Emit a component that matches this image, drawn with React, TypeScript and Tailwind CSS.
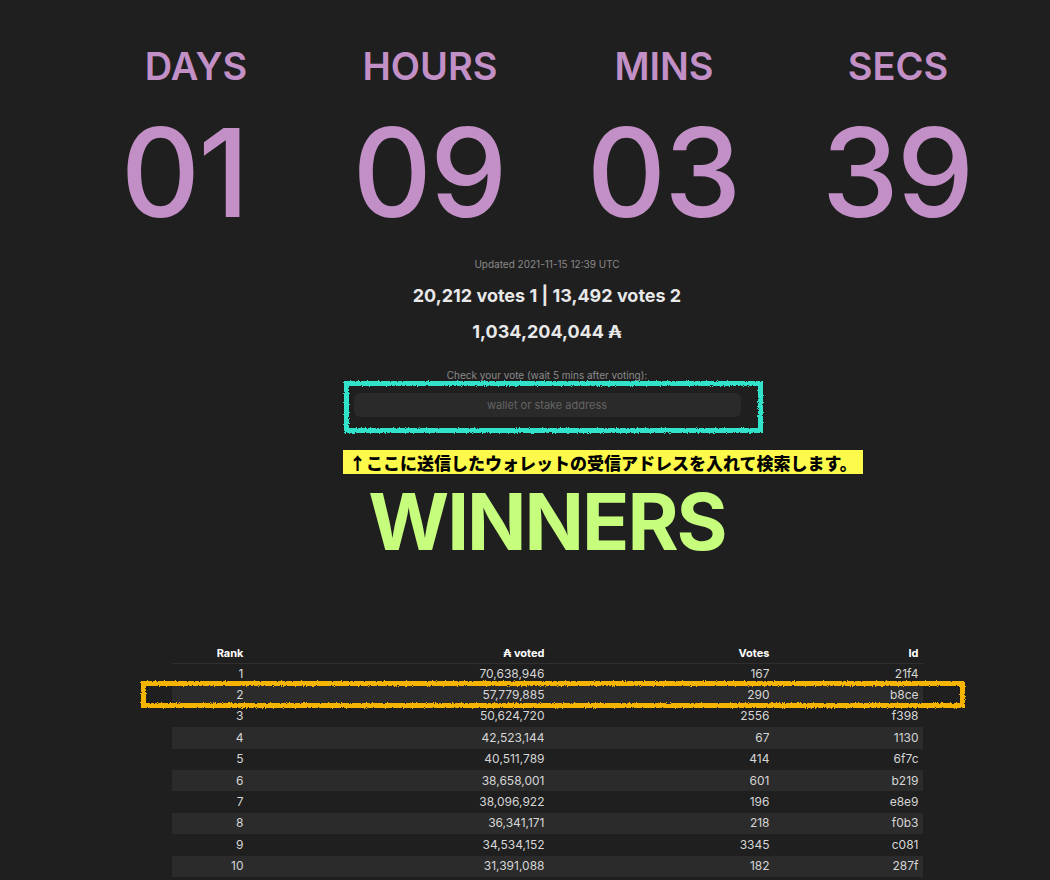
import { clsx } from 'clsx'

const UNITS = [
  { label: 'DAYS', value: '01', nudge: 'pr-[24px]' },
  { label: 'HOURS', value: '09', nudge: 'pr-[2px]' },
  { label: 'MINS', value: '03', nudge: 'pr-[2px]' },
  { label: 'SECS', value: '39', nudge: 'pr-[2px]' },
]

const WINNERS = [
  { rank: 1, ada: '70,638,946', votes: 167, id: '21f4' },
  { rank: 2, ada: '57,779,885', votes: 290, id: 'b8ce' },
  { rank: 3, ada: '50,624,720', votes: 2556, id: 'f398' },
  { rank: 4, ada: '42,523,144', votes: 67, id: '1130' },
  { rank: 5, ada: '40,511,789', votes: 414, id: '6f7c' },
  { rank: 6, ada: '38,658,001', votes: 601, id: 'b219' },
  { rank: 7, ada: '38,096,922', votes: 196, id: 'e8e9' },
  { rank: 8, ada: '36,341,171', votes: 218, id: 'f0b3' },
  { rank: 9, ada: '34,534,152', votes: 3345, id: 'c081' },
  { rank: 10, ada: '31,391,088', votes: 182, id: '287f' },
]

// hand-drawn marker outline
function Marker({ id, color, width, height, stroke, className }: {
  id: string; color: string; width: number; height: number; stroke: number; className: string
}) {
  return (
    <svg width={width} height={height} className={clsx('absolute pointer-events-none', className)}>
      <defs>
        <filter id={id} x="-5%" y="-20%" width="110%" height="140%">
          <feTurbulence type="fractalNoise" baseFrequency="0.9" numOctaves="2" seed="3" />
          <feDisplacementMap in="SourceGraphic" scale="3" />
        </filter>
      </defs>
      <rect x={stroke / 2 + 1} y={stroke / 2 + 1} width={width - stroke - 2} height={height - stroke - 2}
        fill="none" stroke={color} strokeWidth={stroke} filter={`url(#${id})`} />
    </svg>
  )
}

export default function App() {
  return (
    <div className="w-full min-h-[880px] bg-[#1f1f1f] overflow-hidden" style={{ fontFamily: 'Inter, "Noto Sans CJK JP", sans-serif' }}>
      <div className="relative w-[1094px] flex flex-col items-center pt-[46px] pb-[40px]">
        {/* Countdown */}
        <div className="grid grid-cols-4 w-[936px] text-[#c290c6]">
          {UNITS.map(u => (
            <div key={u.label} className="flex flex-col items-center">
              <div className="h-[40px] leading-[40px] text-[38px] font-semibold">{u.label}</div>
              <div className={clsx('mt-[23px] h-[128px] leading-[128px] text-[123px] font-[450] tracking-[-2px]', u.nudge)}>{u.value}</div>
            </div>
          ))}
        </div>

        <div className="mt-[20px] h-[14px] leading-[14px] text-[10px] text-[#8a8a8a]">Updated 2021-11-15 12:39 UTC</div>
        <div className="mt-[13px] h-[24px] leading-[24px] text-[18px] font-bold text-[#e8e8e8]">20,212 votes 1 | 13,492 votes 2</div>
        <div className="mt-[12px] h-[24px] leading-[24px] text-[18px] font-bold text-[#e8e8e8]">1,034,204,044 ₳</div>

        {/* Vote lookup */}
        <div className="mt-[24px] h-[14px] leading-[14px] text-[10px] text-[#8a8a8a]">Check your vote (wait 5 mins after voting):</div>
        <input
          placeholder="wallet or stake address"
          className="mt-[11px] w-[387px] h-[24px] rounded-md bg-[#2a2a2a] text-center text-[11px] text-[#ddd] placeholder:text-[#646464] outline-none"
        />

        <div className="self-start ml-[343px] mt-[33px] h-[24px] px-[6px] flex items-center bg-[#fdfa4c] text-black text-[17px] font-black leading-none"
          style={{ fontFamily: '"Noto Sans CJK JP", sans-serif' }}>
          ↑ここに送信したウォレットの受信アドレスを入れて検索します。
        </div>

        <div className="mt-[8px] h-[80px] leading-[80px] text-[78px] font-bold text-[#c6fd7d] tracking-[-2px]">WINNERS</div>

        {/* Winners table */}
        <table className="mt-[81px] w-[751px] border-collapse text-[12px] text-[#d6d6d6] table-fixed">
          <colgroup>
            <col className="w-[76px]" />
            <col className="w-[301px]" />
            <col className="w-[225px]" />
            <col className="w-[149px]" />
          </colgroup>
          <thead>
            <tr className="h-[20px] border-b border-[#2f2f2f] text-[11px] font-bold text-white">
              <th className="text-right pr-[4px]">Rank</th>
              <th className="text-right pr-[4px]">₳ voted</th>
              <th className="text-right pr-[4px]">Votes</th>
              <th className="text-right pr-[4px]">Id</th>
            </tr>
          </thead>
          <tbody>
            {WINNERS.map(w => (
              <tr key={w.rank} className={clsx('h-[21.4px]', w.rank % 2 === 0 && 'bg-[#2b2b2b]')}>
                <td className="text-right pr-[4px]">{w.rank}</td>
                <td className="text-right pr-[4px]">{w.ada}</td>
                <td className="text-right pr-[4px]">{w.votes}</td>
                <td className="text-right pr-[4px]">{w.id}</td>
              </tr>
            ))}
          </tbody>
        </table>

        <Marker id="mk-cyan" color="#33e3cb" width={421} height={54} stroke={5} className="left-[343px] top-[380px]" />
        <Marker id="mk-orange" color="#f4b400" width={826} height={29} stroke={5} className="left-[140px] top-[680px]" />
      </div>
    </div>
  )
}
